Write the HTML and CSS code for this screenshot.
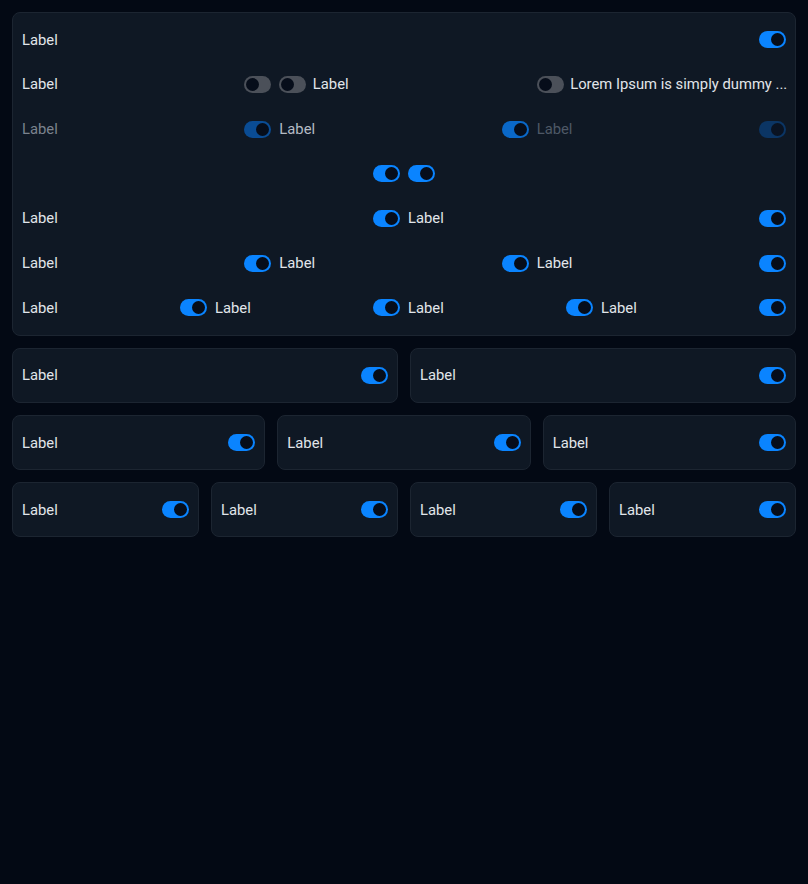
FILE: index.html
```html
<!DOCTYPE html>
<html>
<head>
<meta charset="utf-8">
<link rel="stylesheet" href="styles.css">
</head>
<body>
<div class="page">
  <div class="card big">
    <div class="row cols-1">
      <div class="item"><span class="lbl">Label</span><span class="tg on"></span></div>
    </div>
    <div class="row cols-3">
      <div class="item"><span class="lbl">Label</span><span class="tg off"></span></div>
      <div class="item rev"><span class="tg off"></span><span class="lbl">Label</span></div>
      <div class="item rev"><span class="tg off"></span><span class="lbl long">Lorem Ipsum is simply dummy ...</span></div>
    </div>
    <div class="row cols-3">
      <div class="item dis1"><span class="lbl">Label</span><span class="tg on"></span></div>
      <div class="item dis2"><span class="lbl">Label</span><span class="tg on"></span></div>
      <div class="item dis3"><span class="lbl">Label</span><span class="tg on"></span></div>
    </div>
    <div class="row cols-2">
      <div class="item"><span class="lbl"></span><span class="tg on"></span></div>
      <div class="item rev"><span class="tg on"></span><span class="lbl"></span></div>
    </div>
    <div class="row cols-2">
      <div class="item"><span class="lbl">Label</span><span class="tg on"></span></div>
      <div class="item"><span class="lbl">Label</span><span class="tg on"></span></div>
    </div>
    <div class="row cols-3">
      <div class="item"><span class="lbl">Label</span><span class="tg on"></span></div>
      <div class="item"><span class="lbl">Label</span><span class="tg on"></span></div>
      <div class="item"><span class="lbl">Label</span><span class="tg on"></span></div>
    </div>
    <div class="row cols-4">
      <div class="item"><span class="lbl">Label</span><span class="tg on"></span></div>
      <div class="item"><span class="lbl">Label</span><span class="tg on"></span></div>
      <div class="item"><span class="lbl">Label</span><span class="tg on"></span></div>
      <div class="item"><span class="lbl">Label</span><span class="tg on"></span></div>
    </div>
  </div>

  <div class="grid g2">
    <div class="card small"><div class="item"><span class="lbl">Label</span><span class="tg on"></span></div></div>
    <div class="card small"><div class="item"><span class="lbl">Label</span><span class="tg on"></span></div></div>
  </div>
  <div class="grid g3">
    <div class="card small"><div class="item"><span class="lbl">Label</span><span class="tg on"></span></div></div>
    <div class="card small"><div class="item"><span class="lbl">Label</span><span class="tg on"></span></div></div>
    <div class="card small"><div class="item"><span class="lbl">Label</span><span class="tg on"></span></div></div>
  </div>
  <div class="grid g4">
    <div class="card small"><div class="item"><span class="lbl">Label</span><span class="tg on"></span></div></div>
    <div class="card small"><div class="item"><span class="lbl">Label</span><span class="tg on"></span></div></div>
    <div class="card small"><div class="item"><span class="lbl">Label</span><span class="tg on"></span></div></div>
    <div class="card small"><div class="item"><span class="lbl">Label</span><span class="tg on"></span></div></div>
  </div>
</div>
</body>
</html>
```
FILE: styles.css
```css
html, body {
  margin: 0;
  padding: 0;
  background: #030914;
  height: 100%;
}
body {
  font-family: Roboto, "Noto Sans", sans-serif;
  font-size: 14.8px;
  color: #e1e5ea;
}
.page {
  padding: 12px;
  display: flex;
  flex-direction: column;
  gap: 12.5px;
}
.card {
  background: #0f1824;
  border: 1px solid #1c2531;
  border-radius: 8px;
  box-sizing: border-box;
}
.card.big {
  padding: 4.5px 9px;
}
.card.small {
  padding: 4px 9px;
}
.row {
  display: grid;
  column-gap: 8px;
  height: 44.67px;
}
.cols-1 { grid-template-columns: 1fr; }
.cols-2 { grid-template-columns: repeat(2, minmax(0, 1fr)); }
.cols-3 { grid-template-columns: repeat(3, minmax(0, 1fr)); }
.cols-4 { grid-template-columns: repeat(4, minmax(0, 1fr)); }
.item {
  display: flex;
  align-items: center;
  height: 44.67px;
  gap: 9px;
  min-width: 0;
}
.item.rev { gap: 6.5px; }
.item .lbl {
  flex: 1 1 auto;
  min-width: 0;
  white-space: nowrap;
}
.tg {
  flex: 0 0 auto;
  width: 27px;
  height: 17px;
  border-radius: 9px;
  box-sizing: border-box;
  position: relative;
  background: #0a84ff;
}
.tg::after {
  content: "";
  position: absolute;
  top: 2px;
  width: 13px;
  height: 13px;
  border-radius: 50%;
  background: #060d1a;
}
.tg.on::after { right: 2px; }
.tg.off { background: #4b5059; }
.tg.off::after { left: 2px; }

.dis1 .lbl { color: #7b838e; }
.dis1 .tg { background: #0a4c94; }
.dis2 .lbl { color: #b4bbc4; }
.dis2 .tg { background: #0a68c8; }
.dis3 .lbl { color: #4e5866; }
.dis3 .tg { background: #0b3564; }
.dis3 .tg::after { background: #0a1322; }

.grid {
  display: grid;
  gap: 12px;
}
.g2 { grid-template-columns: repeat(2, minmax(0, 1fr)); }
.g3 { grid-template-columns: repeat(3, minmax(0, 1fr)); }
.g4 { grid-template-columns: repeat(4, minmax(0, 1fr)); }
```
